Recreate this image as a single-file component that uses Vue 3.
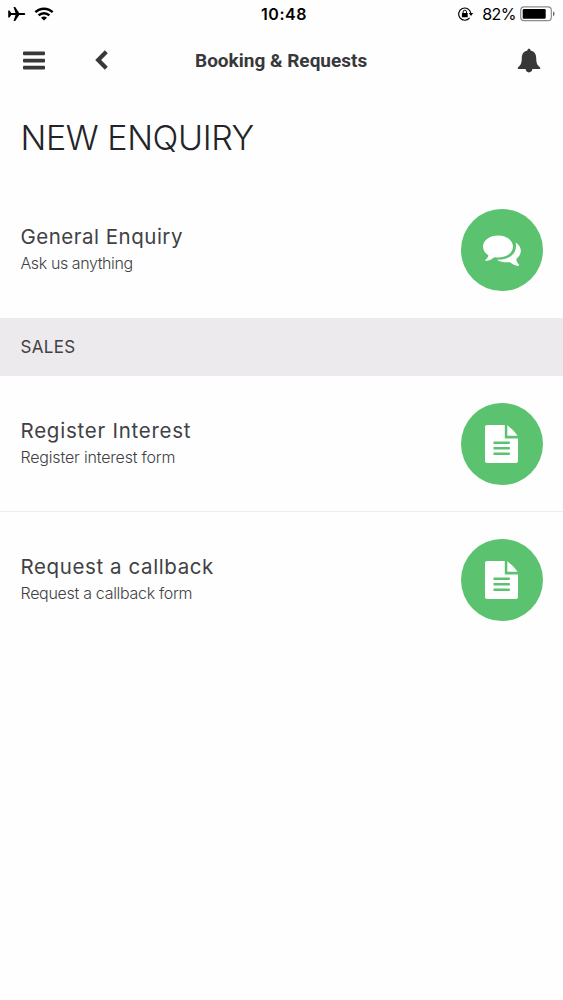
<script setup>
const general = { title: 'General Enquiry', note: 'Ask us anything', icon: 'chat', key: 'general' }
const sales = [
  { title: 'Register Interest', note: 'Register interest form', icon: 'file', key: 'interest' },
  { title: 'Request a callback', note: 'Request a callback form', icon: 'file', key: 'callback' },
]
const sections = [
  { name: '', rows: [general] },
  { name: 'SALES', rows: sales },
]
</script>

<template>
  <div class="screen">
    <div class="status">
      <div class="left">
        <svg width="18" height="16" viewBox="0 0 18 16"><path d="M17.3 8c0 .7-.7 1.1-1.6 1.1h-4.500L7.200 15H5.500l2-5.900H3.200L1.500 11.500H.2V4.500h1.300l1.700 2.400h4.300L5.500 1h1.700l4 5.900h4.500c.9 0 1.600.4 1.600 1.100z" /></svg>
        <svg width="20" height="14" viewBox="0 0 20 14" fill="none" stroke="#000" stroke-width="2.5"><path d="M1.400 5.200a12.400 12.400 0 0 1 17.200 0M4.600 8.400a7.800 7.800 0 0 1 10.800 0" /><path d="M10 13.600 7 10.700q3-2.400 6 0z" fill="#000" stroke="none" /></svg>
      </div>
      <div class="clock">10:48</div>
      <div class="right">
        <svg width="16" height="14" viewBox="0 0 16 14"><path d="M11.600 10.900A6.100 6.100 0 1 1 12.800 6" fill="none" stroke="#000" stroke-width="1.2" /><path d="M10.800 6h4.400l-2.200 3zM3.900 6.100h5.800v4.200H3.900z" /><path d="M5.100 6.500V4.900a1.700 1.700 0 0 1 3.400 0v1.600" fill="none" stroke="#000" stroke-width="1" /></svg>
        <span class="percent">82%</span>
        <svg width="36" height="16" viewBox="0 0 36 16"><rect x=".7" y=".9" width="30.600" height="13.800" rx="3.400" fill="#fff" stroke="#8b8b8b" stroke-width="1.2" /><rect x="2.700" y="3" width="23" height="9.800" rx="1.200" /><path d="M33 5.200q1.700.9 1.700 2.600T33 10.400z" fill="#777" /></svg>
      </div>
    </div>

    <header class="nav">
      <svg class="menu" width="22" height="19" viewBox="0 0 22 19"><rect y=".6" width="22" height="3.700" rx="1" /><rect y="7.700" width="22" height="3.700" rx="1" /><rect y="14.800" width="22" height="3.700" rx="1" /></svg>
      <svg class="back" width="14" height="20" viewBox="0 0 14 20"><path d="M11.300 1.800 3.200 10l8.100 8.200" fill="none" stroke="#38383a" stroke-width="4.200" /></svg>
      <h2>Booking &amp; Requests</h2>
      <svg class="bell" width="24" height="26" viewBox="0 0 24 26"><path d="M12 .8c1 0 1.500.7 1.600 1.600 4 .8 5.600 4 5.600 7.400 0 5.400 1.200 7.700 4 9.700v1.600H15.400c-.3 2.200-1.600 3.300-3.400 3.300s-3.100-1.100-3.400-3.300H.8v-1.600c2.800-2 4-4.300 4-9.700 0-3.400 1.600-6.600 5.600-7.400C10.500 1.500 11 .8 12 .8z" /></svg>
    </header>

    <h1>NEW ENQUIRY</h1>

    <section v-for="s in sections" :key="s.name">
      <div v-if="s.name" class="band">{{ s.name }}</div>
      <div v-for="row in s.rows" :key="row.key" class="row" :class="row.key">
        <div class="copy">
          <div class="title">{{ row.title }}</div>
          <div class="note">{{ row.note }}</div>
        </div>
        <div class="disc">
          <svg v-if="row.icon === 'chat'" width="40" height="34" viewBox="0 0 40 34" fill="#fff">
            <path d="M16.300 2.600C24.800 2.600 31 7.500 31 13.500S24.800 24.600 16.300 24.600q-2 0-4-.4C9.500 26.600 6.800 27.700 3.800 27.900c-.7-.1-.7-.8-.2-1.200 1.500-1.100 2.400-2.500 2.800-4.500C3 20.200 1 17.100 1 13.500 1 7.500 7.800 2.600 16.300 2.600z" />
            <path d="M33.700 9.600c3.300 2.100 5.100 5 5.100 8.200 0 3.200-1.700 6-4.500 8.100.3 2.400 1 4 2.400 5.400.5.600.2 1.700-.6 1.600-3-.3-5.500-1.700-8-3.700-5.300.5-9.900-.3-13.300-2.500C26.500 27 34.500 21.300 34 12.600c0-1-.1-2-.3-3z" />
          </svg>
          <svg v-else width="34" height="40" viewBox="0 0 34 40">
            <path d="M2 1h17.800v13.500H33V37q0 2-2 2H2q-2 0-2-2V3q0-2 2-2z" fill="#fff" />
            <path d="M22.300 1.200c3.200 2.500 7.600 6.700 10.300 10.600H22.300z" fill="#fff" />
            <path d="M8.500 17.500h16.300v2.400H8.500zM8.500 23h16.300v2.400H8.500zM8.500 28.500h16.300v2.400H8.500z" fill="#5bc36f" />
          </svg>
        </div>
      </div>
    </section>
  </div>
</template>

<style>
body { margin: 0; background: #fefefe; }
</style>

<style scoped>
.screen { width: 563px; height: 1000px; overflow: hidden; background: #fefefe; color: #414145; font-family: Inter, "Liberation Sans", sans-serif; }
.status { height: 30px; box-sizing: border-box; padding: 0 7px 2px 8px; display: grid; grid-template-columns: 1fr auto 1fr; align-items: center; color: #000; }
.left { display: flex; align-items: center; gap: 8px; }
.clock { font-size: 16px; font-weight: 600; letter-spacing: .5px; margin-left: 4px; }
.right { display: flex; align-items: center; justify-content: flex-end; }
.percent { font-size: 16px; margin: 0 4px 0 8px; letter-spacing: -.5px; }
.nav { height: 60px; display: flex; align-items: center; padding: 0 22px 0 23px; fill: #38383a; }
.menu { margin-top: 1px; }
.back { margin-left: 50px; }
h2 { margin: 0 0 0 86px; padding-top: 2px; font: 700 19px/24px Roboto, sans-serif; color: #38383a; white-space: nowrap; }
.bell { margin-left: auto; margin-top: 1px; }
h1 { margin: 0; height: 92px; box-sizing: border-box; padding: 28px 0 0 20.500px; font-size: 34px; line-height: 40px; font-weight: 300; letter-spacing: -.4px; color: #242428; white-space: nowrap; }
.row { height: 136px; box-sizing: border-box; padding: 0 20.500px 0 20.500px; display: flex; justify-content: space-between; align-items: center; white-space: nowrap; }
.interest { border-bottom: 1px solid #ededee; }
.copy { padding-bottom: 3px; }
.title { font-size: 20.500px; line-height: 28px; font-weight: 400; letter-spacing: .75px; }
.note { font-size: 16px; line-height: 22px; margin-top: 1px; font-weight: 300; letter-spacing: -.3px; }
.general .title { letter-spacing: .5px; }
.callback .title { letter-spacing: .6px; }
.general .note { letter-spacing: -.4px; }
.interest .note { letter-spacing: -.18px; }
.disc { width: 82px; height: 82px; border-radius: 50%; background: #5bc36f; display: flex; align-items: center; justify-content: center; }
.band { height: 58px; box-sizing: border-box; background: #eceaed; padding: 0 20.500px; font-size: 17px; line-height: 58px; letter-spacing: .3px; }
</style>
